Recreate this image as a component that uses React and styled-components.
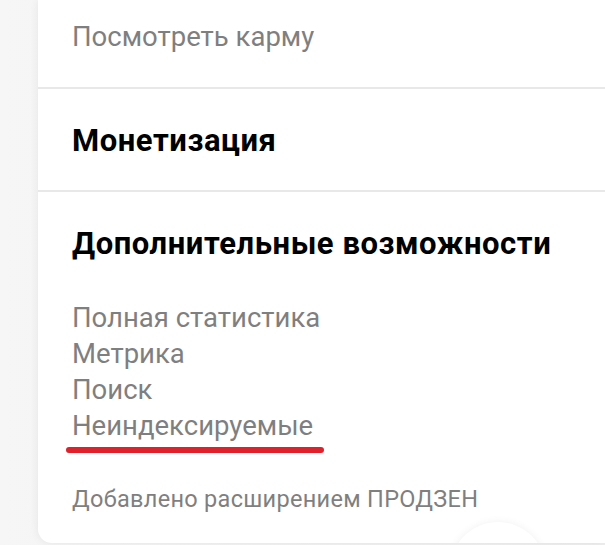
import React from 'react';
import styled, { createGlobalStyle } from 'styled-components';

const GlobalStyle = createGlobalStyle`
  html, body {
    margin: 0;
    padding: 0;
    background: #f3f3f3;
    font-family: Roboto, "Open Sans", Arial, sans-serif;
    overflow: hidden;
  }
`;

const Page = styled.div`
  width: 605px;
  height: 545px;
  display: flex;
  overflow: hidden;
  background: linear-gradient(90deg, #f6f6f6 0%, #efefef 100%);
`;

const Card = styled.div`
  position: relative;
  margin-left: 38px;
  flex: 1;
  height: 543px;
  background: #fff;
  border-bottom-left-radius: 14px;
  box-shadow: 0 0 10px rgba(0, 0, 0, 0.07);
  overflow: hidden;
`;

const Section = styled.div`
  padding: ${(p) => p.$pad};
  padding-left: 34px;
  border-bottom: ${(p) => (p.$last ? 'none' : '2px solid #e8e8e8')};
`;

const GrayLink = styled.div`
  font-size: 27.5px;
  line-height: 36px;
  color: #7f7f7f;
  white-space: nowrap;
`;

const Title = styled.div`
  font-size: 31px;
  line-height: 36px;
  font-weight: 700;
  letter-spacing: 0.55px;
  color: #000;
  white-space: nowrap;
`;

const LinkList = styled.div`
  margin-top: 38px;
  display: flex;
  flex-direction: column;
`;

const Marker = styled.div`
  margin: 3px 0 0 -6px;
  width: 258px;
  height: 6px;
  border-radius: 3px;
  background: #e0212b;
`;

const Note = styled.div`
  margin-top: 32px;
  font-size: 23.5px;
  line-height: 28px;
  letter-spacing: 0.3px;
  color: #7f7f7f;
  white-space: nowrap;
`;

const FloatButton = styled.div`
  position: absolute;
  left: 412px;
  top: 522px;
  width: 96px;
  height: 96px;
  border-radius: 50%;
  background: #fff;
  box-shadow: 0 0 8px rgba(0, 0, 0, 0.06);
`;

export default function App() {
  return (
    <>
      <GlobalStyle />
      <Page>
        <Card>
          <Section $pad="19px 0 32px">
            <GrayLink>Посмотреть карму</GrayLink>
          </Section>
          <Section $pad="34px 0 31px">
            <Title>Монетизация</Title>
          </Section>
          <Section $pad="34px 0 0" $last>
            <Title>Дополнительные возможности</Title>
            <LinkList>
              <GrayLink>Полная статистика</GrayLink>
              <GrayLink>Метрика</GrayLink>
              <GrayLink>Поиск</GrayLink>
              <GrayLink>Неиндексируемые</GrayLink>
            </LinkList>
            <Marker />
            <Note>Добавлено расширением ПРОДЗЕН</Note>
          </Section>
          <FloatButton />
        </Card>
      </Page>
    </>
  );
}
